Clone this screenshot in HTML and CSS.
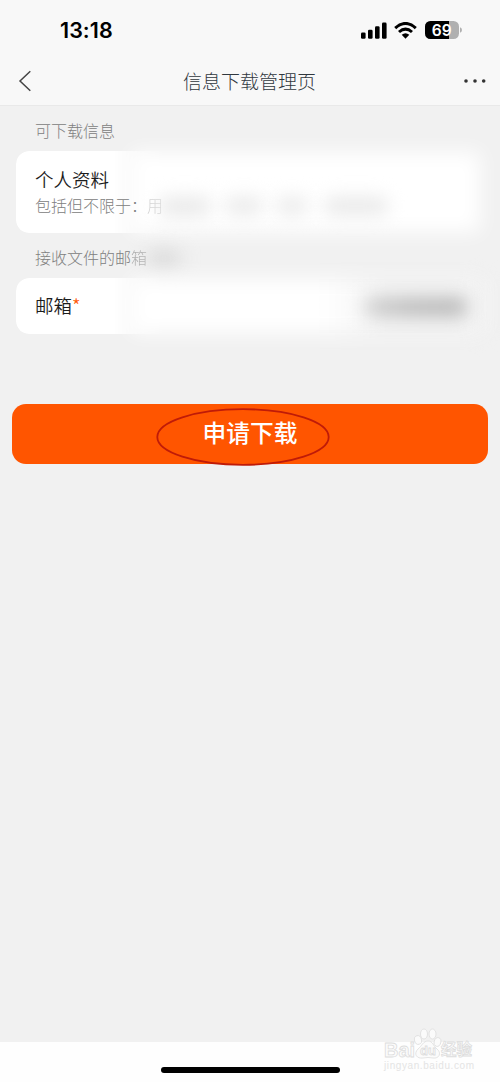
FILE: index.html
```html
<!DOCTYPE html>
<html lang="zh-CN">
<head>
<meta charset="utf-8">
<title>信息下载管理页</title>
<link rel="stylesheet" href="styles.css">
</head>
<body>
<div class="screen">
  <header class="header">
    <div class="status">
      <span class="time">13:18</span>
      <div class="indicators">
        <svg class="signal" width="26" height="17" viewBox="0 0 26 17"><rect x="0" y="10.5" width="4.6" height="6.3" rx="1.3"/><rect x="7" y="7.8" width="4.6" height="9" rx="1.3"/><rect x="14" y="4.3" width="4.6" height="12.5" rx="1.3"/><rect x="21" y=".6" width="4.6" height="16.2" rx="1.3"/></svg>
        <svg class="wifi" width="23" height="17" viewBox="0 0 23 17"><path d="M1.2 6.1Q11.5-3.2 21.8 6.1M5 10Q11.5 4.2 18 10" fill="none" stroke="#000" stroke-width="3"/><path d="M7.7 12.8Q11.5 9.6 15.3 12.8L11.5 16.8Z"/></svg>
        <svg class="battery" width="37" height="18" viewBox="0 0 37 18"><rect width="34" height="18" rx="5.5" fill="#b0b0b0"/><path d="M5.5 0H24V18H5.5A5.5 5.5 0 0 1 0 12.5V5.5A5.5 5.5 0 0 1 5.5 0Z"/><path d="M35 6.2Q37 7 37 9T35 11.8Z" fill="#b0b0b0"/><text x="16.7" y="14.8" text-anchor="middle">69</text></svg>
      </div>
    </div>
    <nav class="nav">
      <svg class="back" width="14" height="22" viewBox="0 0 14 22"><path d="M12.3 1.2L2 11L12.3 20.8"/></svg>
      <h1 class="title">信息下载管理页</h1>
      <svg class="more" width="22" height="6" viewBox="0 0 22 6"><circle cx="2" cy="3" r="1.8"/><circle cx="11" cy="3" r="1.8"/><circle cx="19.7" cy="3" r="1.8"/></svg>
    </nav>
  </header>
  <main class="content">
    <h2 class="label">可下载信息</h2>
    <section class="card card-info">
      <div class="name">个人资料</div>
      <div class="detail">包括但不限于：<span class="fading">用</span></div>
      <div class="smudges"><i class="smudge smudge-a"></i><i class="smudge smudge-b"></i><i class="smudge smudge-c"></i><i class="smudge smudge-d"></i></div>
    </section>
    <h2 class="label label-mail">接收文件的邮<span class="box-char">箱</span><i class="smudge smudge-label"></i></h2>
    <section class="card card-mail">
      <div class="name">邮箱<span class="required">*</span></div>
      <i class="smudge smudge-mail"></i>
    </section>
    <button class="submit">申请下载<svg class="ring" width="174" height="58" viewBox="0 0 174 58"><ellipse cx="87" cy="29" rx="85.7" ry="27.8"/></svg></button>
  </main>
  <footer class="footer">
    <div class="home-bar"></div>
    <svg class="watermark" width="100" height="50" viewBox="0 0 100 50">
      <g class="mark">
        <text class="mark-latin" x="4" y="32" textLength="31" lengthAdjust="spacingAndGlyphs">Bai</text>
        <ellipse cx="38" cy="15" rx="3.5" ry="4.4" transform="rotate(-15 38 15)"/>
        <ellipse cx="44" cy="9" rx="3.5" ry="5"/>
        <ellipse cx="52.5" cy="9" rx="3.5" ry="5"/>
        <ellipse cx="57.5" cy="17" rx="3.3" ry="4.4" transform="rotate(15 57.5 17)"/>
        <path d="M48 16C43 16 42 21 38 24C33 29 37 34 43 33Q48 32 53 33C59 34 62 28 57 24C53 21 53 16 48 16Z"/>
        <text class="mark-du" x="40" y="30">du</text>
        <text class="mark-cn" x="61" y="30" textLength="31">经验</text>
      </g>
      <text class="mark-url" x="4" y="44" textLength="90">jingyan.baidu.com</text>
    </svg>
  </footer>
</div>
</body>
</html>
```
FILE: styles.css
```css
* { box-sizing: border-box; }
body {
  margin: 0;
  font-family: "Liberation Sans", "Noto Sans CJK SC", sans-serif;
}
.screen {
  width: 500px;
  height: 1082px;
  display: flex;
  flex-direction: column;
  background: #f1f1f1;
  overflow: hidden;
}
.header {
  height: 106px;
  flex: none;
  background: #f8f8f8;
  border-bottom: 1px solid #e9e9e9;
}
.status {
  height: 58px;
  padding: 2px 38px 0 60px;
  display: flex;
  align-items: center;
  justify-content: space-between;
}
.time {
  font: 600 21.5px/26px Inter, sans-serif;
  letter-spacing: .05px;
}
.indicators { display: flex; align-items: center; gap: 9px; }
.signal { margin-right: -1px; position: relative; left: 1px; }
.battery { margin-left: -1px; }
.battery text { fill: #fff; font: 600 15.5px Inter, sans-serif; }
.nav {
  height: 46px;
  padding: 0 14px 0 18px;
  display: flex;
  align-items: center;
  justify-content: space-between;
}
.back path { fill: none; stroke: #444; stroke-width: 1.5; }
.more { fill: #333; }
.title {
  margin: 0 0 1px 3px;
  font-family: "Noto Sans CJK SC", sans-serif;
  font-size: 19px;
  font-weight: 300;
  line-height: 28px;
  color: #30373e;
}
.content {
  flex: 1;
  display: flex;
  flex-direction: column;
}
.label {
  margin: 0;
  padding: 14px 35px 7px;
  height: 45px;
  font-size: 16px;
  font-weight: 300;
  line-height: 23px;
  color: #808080;
}
.label-mail { position: relative; }
.box-char { opacity: .6; }
.card {
  position: relative;
  isolation: isolate;
  margin: 0 16px;
  padding: 0 19px;
}
.card::before,
.card::after {
  content: "";
  position: absolute;
  z-index: -1;
  background: #fff;
}
.card::before {
  inset: 0;
  border-radius: 13px;
  mask-image: linear-gradient(90deg, #000 95px, transparent 150px);
}
.card::after {
  inset: 1px 4px 1px 116px;
  filter: blur(10px);
}
.card-info { height: 82px; padding-top: 16px; }
.card-mail { height: 56px; padding-top: 15px; }
.card-mail::after {
  right: 0;
  background: linear-gradient(90deg, #fff 190px, #f4f4f4 250px);
}
.name { font-size: 18.5px; font-weight: 350; line-height: 28px; color: #1c1c1c; }
.detail { font-size: 16px; font-weight: 300; line-height: 23px; color: #808080; }
.fading { opacity: .35; }
.required { color: #ff5a0a; font-family: "Noto Sans CJK SC", sans-serif; line-height: 1; }
.smudge { position: absolute; filter: blur(9px); border-radius: 8px; }
.smudge-a { left: 143px; top: 46px; width: 52px; height: 19px; background: #e9e9e9; }
.smudge-b { left: 209px; top: 46px; width: 38px; height: 18px; background: #eaeaea; }
.smudge-c { left: 260px; top: 46px; width: 32px; height: 18px; background: #ebebeb; }
.smudge-d { left: 308px; top: 46px; width: 64px; height: 18px; background: #e9e9e9; }
.smudge-label { left: 147px; top: 17px; width: 34px; height: 17px; background: #dadada; }
.smudge-mail {
  right: 17px;
  top: 19px;
  width: 102px;
  height: 20px;
  background: linear-gradient(90deg, #d2d2d2, #bdbdbd 45%, #b8b8b8);
}
.submit {
  position: relative;
  margin: 70px 12px 0;
  height: 60px;
  padding: 0 0 4px;
  border: 0;
  border-radius: 14px;
  background: #ff5500;
  color: #fff;
  font: 500 23.7px/34px "Noto Sans CJK SC", sans-serif;
}
.ring { position: absolute; left: 144px; top: 4px; overflow: visible; }
.ring ellipse { fill: none; stroke: #bf1b08; stroke-width: 1.8; }
.footer {
  position: relative;
  height: 40px;
  padding-top: 24.5px;
  background: #fefefe;
}
.home-bar {
  width: 179px;
  height: 6px;
  margin-left: 161px;
  border-radius: 3px;
  background: #000;
}
.watermark { position: absolute; left: 380px; top: -17px; }
.mark { fill: #fbfbfb; stroke: #dddddd; stroke-width: .8; }
.mark text { font-weight: 700; }
.mark-latin { font-size: 20px; font-family: "Liberation Sans", sans-serif; }
.mark-du { font-size: 13px; font-family: "Liberation Sans", sans-serif; }
.mark-cn { font-size: 15.5px; font-family: "Liberation Sans", "Noto Sans CJK SC", sans-serif; }
.mark-url { fill: #e4e4e4; font: 10px "Liberation Sans", sans-serif; }
```
